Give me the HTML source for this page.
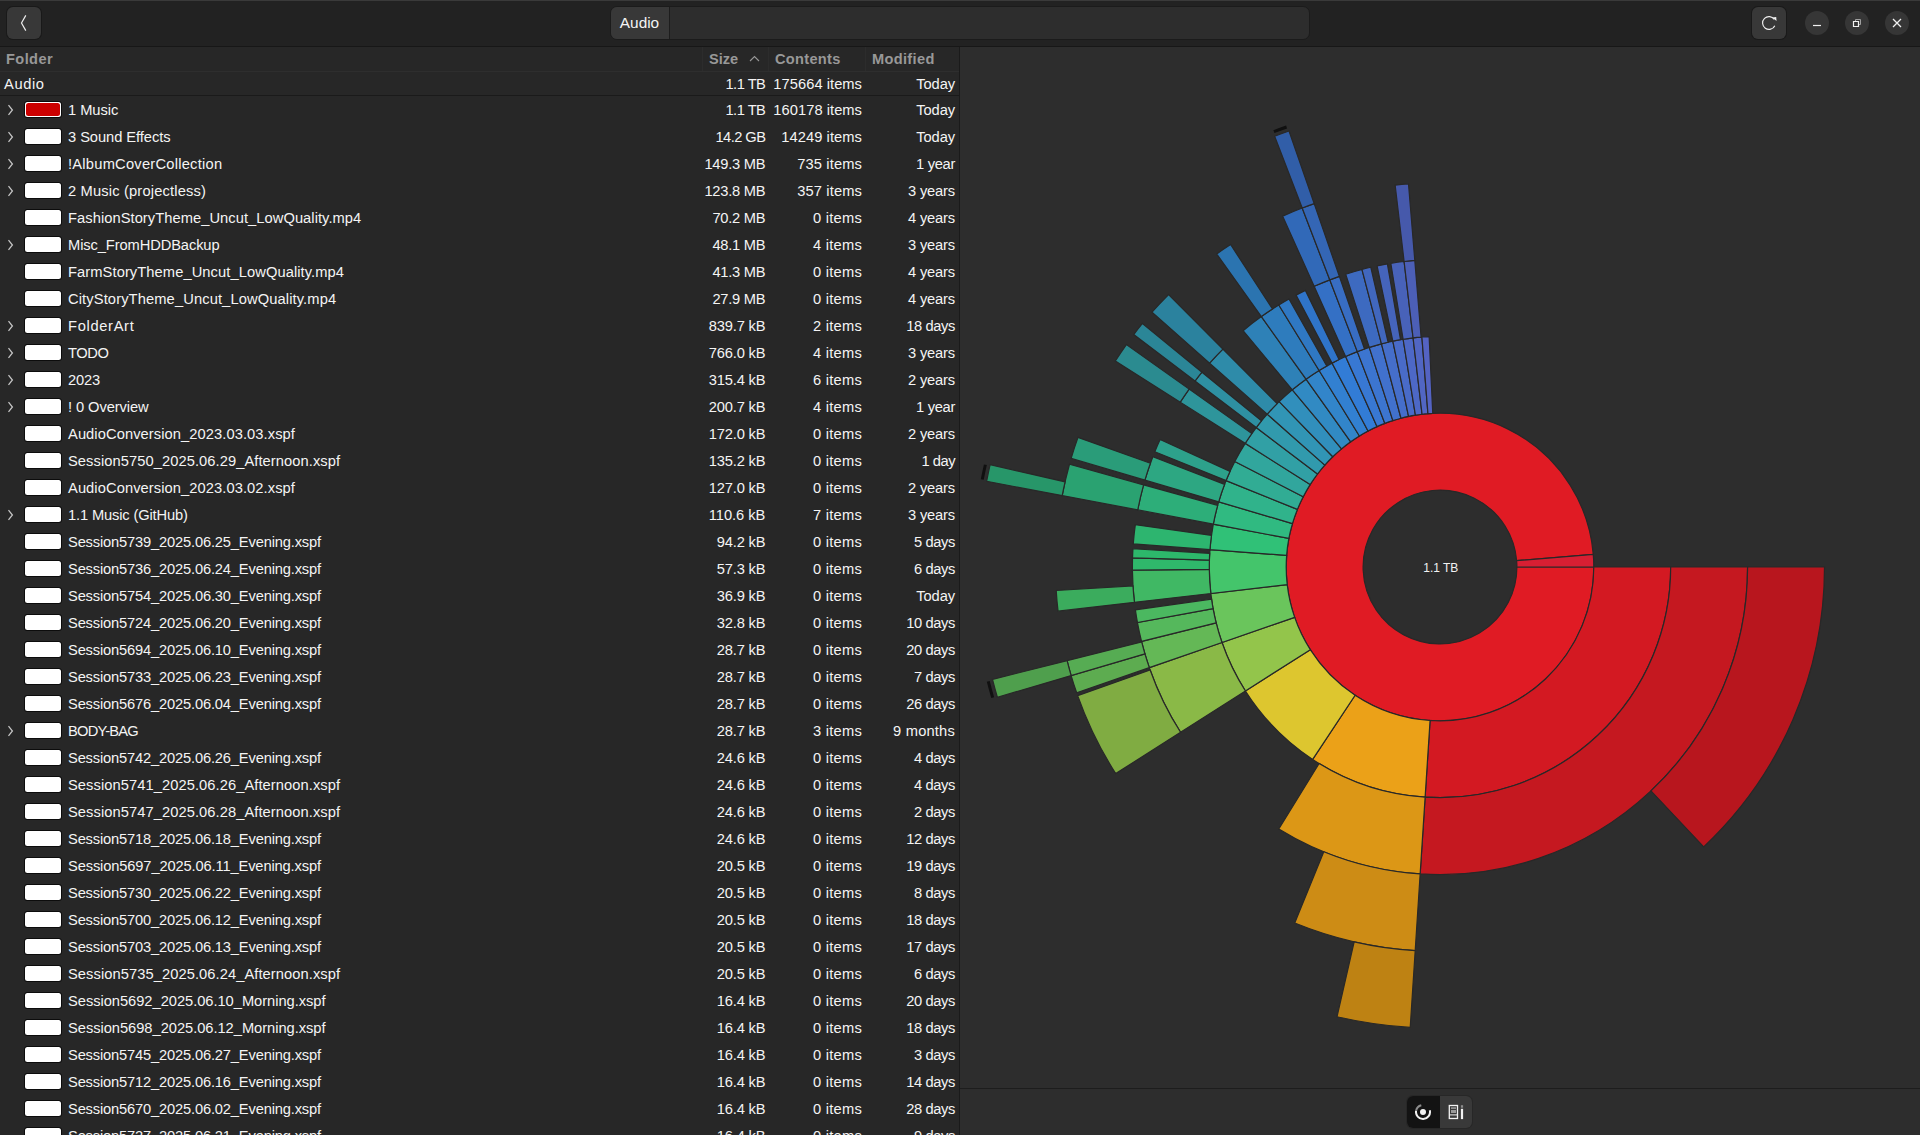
<!DOCTYPE html>
<html lang="en"><head><meta charset="utf-8"><title>Disk Usage Analyzer</title>
<style>
*{box-sizing:border-box;margin:0;padding:0}
html,body{width:1920px;height:1135px;overflow:hidden;background:#2d2d2d}
body{font-family:"Liberation Sans",sans-serif;font-size:14.7px;color:#f4f4f4;position:relative}
.hdr{position:absolute;left:0;top:0;width:1920px;height:47px;background:#222222;box-shadow:inset 0 1px 0 #3a3a3a,inset 0 -1px 0 #171717}
.btn{position:absolute;top:7px;width:34px;height:32px;border-radius:6px;background:#383838;box-shadow:0 0 0 1px #191919}
.btn svg{position:absolute;left:9px;top:8px;overflow:visible}
.path{position:absolute;left:610px;top:6px;width:700px;height:34px;border-radius:7px;background:#2d2d2d;border:1px solid #1b1b1b;overflow:hidden}
.path .crumb{position:absolute;left:0;top:0;width:59px;height:32px;background:#383838;border-right:1px solid #1d1d1d;line-height:32px;text-align:center;font-size:15.4px;text-indent:-1px;color:#f4f4f4}
.wb{position:absolute;top:11px;width:24px;height:24px;border-radius:12px;background:#363636}
.wb svg{position:absolute;left:4px;top:4px}
.list{position:absolute;left:0;top:47px;width:959px;height:1088px;background:#272727;overflow:hidden}
.vsep{position:absolute;left:959px;top:47px;width:1px;height:1088px;background:#1a1a1a}
.colh{position:absolute;left:0;top:0;width:959px;height:25px;border-bottom:1px solid #2e2e2e;font-weight:bold;color:#989898;font-size:14.6px;line-height:24px}
.colh span{position:absolute;top:0}
.colh i{position:absolute;top:0;width:1px;height:24px;background:#2c2c2c}
.root{position:absolute;left:0;top:25px;width:959px;height:24px;line-height:25px;border-bottom:1px solid #1a1a1a}
.rows{position:absolute;left:0;top:50px;width:959px}
.row{position:relative;height:27px;line-height:26px;white-space:nowrap}
.row .exp{position:absolute;left:2.7px;top:5px}
.sw{position:absolute;left:25px;top:5px;width:36px;height:15px;border-radius:2.5px;background:#fff;box-shadow:0 0 0 1px #0c0c0c}
.sw.r:after{content:'';position:absolute;left:1px;top:1px;right:1px;bottom:1px;border-radius:2.5px;background:#cc0000}
.nm{position:absolute;left:68px;top:0}
.c1,.c2,.c3{position:absolute;top:0;text-align:right}
.c1{right:193.6px}.c2{right:97px}.c3{right:4px}
.chart{position:absolute;left:960px;top:47px}
.bot{position:absolute;left:960px;top:1088px;width:960px;height:47px;background:#2d2d2d;border-top:1px solid #1d1d1d}
.tg{position:absolute;left:447px;top:7px;width:64.6px;height:32px;border-radius:6px;background:#393939;overflow:hidden;box-shadow:0 0 0 1px #272727}
.tg .a{position:absolute;left:0;top:0;width:32.8px;height:34px;background:#131313}
.tg svg{position:absolute}

</style></head>
<body>
<div class="hdr">
<div class="btn" style="left:7px"><svg width="16" height="16" viewBox="0 0 16 16"><path d="M9.8 0.4L5.5 8l4.3 7.6" fill="none" stroke="#ececec" stroke-width="1.2"/></svg></div>
<div class="path"><div class="crumb">Audio</div></div>
<div class="btn" style="left:1752px"><svg width="16" height="16" viewBox="0 0 16 16"><path d="M13.8 10.7A6.4 6.4 0 1 1 13.3 4.4" fill="none" stroke="#f0f0f0" stroke-width="1.15"/><path d="M11.3 2.5L15.2 1.9L15.5 5.9z" fill="#f0f0f0"/></svg></div>
<div class="wb" style="left:1805px"><svg width="16" height="16" viewBox="0 0 16 16"><path d="M4 10.5h8" stroke="#f0f0f0" stroke-width="1.2"/></svg></div>
<div class="wb" style="left:1845px"><svg width="16" height="16" viewBox="0 0 16 16"><path d="M4.5 6.5h5v5h-5z" fill="none" stroke="#f0f0f0" stroke-width="1.2"/><path d="M6.5 6V4.5h5v5H10" fill="none" stroke="#a0a0a0" stroke-width="1"/></svg></div>
<div class="wb" style="left:1885px"><svg width="16" height="16" viewBox="0 0 16 16"><path d="M4 4l8 8M12 4l-8 8" stroke="#f0f0f0" stroke-width="1.3"/></svg></div>
</div>
<div class="list">
<div class="colh"><span style="left:6px;letter-spacing:.4px">Folder</span><i style="left:702px"></i><span style="left:709px">Size</span><svg style="position:absolute;left:746.5px;top:4px" width="16" height="16" viewBox="0 0 16 16"><path d="M3 10l4.5-4.5L12 10" fill="none" stroke="#989898" stroke-width="1.1"/></svg><i style="left:768px"></i><span style="left:775px;letter-spacing:.3px">Contents</span><i style="left:865px"></i><span style="left:872px;letter-spacing:.33px">Modified</span></div>
<div class="root"><span class="nm" style="left:4px;letter-spacing:.6px">Audio</span><span class="c1" style="letter-spacing:-.503px">1.1 TB</span><span class="c2" style="letter-spacing:.039px">175664 items</span><span class="c3" style="letter-spacing:-.101px">Today</span></div>
<div class="rows">
<div class="row"><svg class="exp" width="16" height="16" viewBox="0 0 16 16"><path d="M5.5 3.2L9.4 8l-3.9 4.8" fill="none" stroke="#c6c6c6" stroke-width="1.25"/></svg><span class="sw r"></span><span class="nm" style="letter-spacing:-0.058px">1 Music</span><span class="c1" style="letter-spacing:-0.503px">1.1 TB</span><span class="c2" style="letter-spacing:0.039px">160178 items</span><span class="c3" style="letter-spacing:-0.101px">Today</span></div>
<div class="row"><svg class="exp" width="16" height="16" viewBox="0 0 16 16"><path d="M5.5 3.2L9.4 8l-3.9 4.8" fill="none" stroke="#c6c6c6" stroke-width="1.25"/></svg><span class="sw w"></span><span class="nm" style="letter-spacing:-0.062px">3 Sound Effects</span><span class="c1" style="letter-spacing:-0.556px">14.2 GB</span><span class="c2" style="letter-spacing:0.062px">14249 items</span><span class="c3" style="letter-spacing:-0.101px">Today</span></div>
<div class="row"><svg class="exp" width="16" height="16" viewBox="0 0 16 16"><path d="M5.5 3.2L9.4 8l-3.9 4.8" fill="none" stroke="#c6c6c6" stroke-width="1.25"/></svg><span class="sw w"></span><span class="nm" style="letter-spacing:0.234px">!AlbumCoverCollection</span><span class="c1" style="letter-spacing:-0.234px">149.3 MB</span><span class="c2" style="letter-spacing:0.124px">735 items</span><span class="c3" style="letter-spacing:-0.305px">1 year</span></div>
<div class="row"><svg class="exp" width="16" height="16" viewBox="0 0 16 16"><path d="M5.5 3.2L9.4 8l-3.9 4.8" fill="none" stroke="#c6c6c6" stroke-width="1.25"/></svg><span class="sw w"></span><span class="nm" style="letter-spacing:0.163px">2 Music (projectless)</span><span class="c1" style="letter-spacing:-0.234px">123.8 MB</span><span class="c2" style="letter-spacing:0.124px">357 items</span><span class="c3" style="letter-spacing:-0.167px">3 years</span></div>
<div class="row"><span class="sw w"></span><span class="nm" style="letter-spacing:0.056px">FashionStoryTheme_Uncut_LowQuality.mp4</span><span class="c1" style="letter-spacing:-0.243px">70.2 MB</span><span class="c2" style="letter-spacing:0.222px">0 items</span><span class="c3" style="letter-spacing:-0.167px">4 years</span></div>
<div class="row"><svg class="exp" width="16" height="16" viewBox="0 0 16 16"><path d="M5.5 3.2L9.4 8l-3.9 4.8" fill="none" stroke="#c6c6c6" stroke-width="1.25"/></svg><span class="sw w"></span><span class="nm" style="letter-spacing:-0.108px">Misc_FromHDDBackup</span><span class="c1" style="letter-spacing:-0.243px">48.1 MB</span><span class="c2" style="letter-spacing:0.222px">4 items</span><span class="c3" style="letter-spacing:-0.167px">3 years</span></div>
<div class="row"><span class="sw w"></span><span class="nm" style="letter-spacing:0.083px">FarmStoryTheme_Uncut_LowQuality.mp4</span><span class="c1" style="letter-spacing:-0.243px">41.3 MB</span><span class="c2" style="letter-spacing:0.222px">0 items</span><span class="c3" style="letter-spacing:-0.167px">4 years</span></div>
<div class="row"><span class="sw w"></span><span class="nm" style="letter-spacing:0.114px">CityStoryTheme_Uncut_LowQuality.mp4</span><span class="c1" style="letter-spacing:-0.243px">27.9 MB</span><span class="c2" style="letter-spacing:0.222px">0 items</span><span class="c3" style="letter-spacing:-0.167px">4 years</span></div>
<div class="row"><svg class="exp" width="16" height="16" viewBox="0 0 16 16"><path d="M5.5 3.2L9.4 8l-3.9 4.8" fill="none" stroke="#c6c6c6" stroke-width="1.25"/></svg><span class="sw w"></span><span class="nm" style="letter-spacing:0.666px">FolderArt</span><span class="c1" style="letter-spacing:-0.161px">839.7 kB</span><span class="c2" style="letter-spacing:0.222px">2 items</span><span class="c3" style="letter-spacing:-0.379px">18 days</span></div>
<div class="row"><svg class="exp" width="16" height="16" viewBox="0 0 16 16"><path d="M5.5 3.2L9.4 8l-3.9 4.8" fill="none" stroke="#c6c6c6" stroke-width="1.25"/></svg><span class="sw w"></span><span class="nm" style="letter-spacing:-0.418px">TODO</span><span class="c1" style="letter-spacing:-0.161px">766.0 kB</span><span class="c2" style="letter-spacing:0.222px">4 items</span><span class="c3" style="letter-spacing:-0.167px">3 years</span></div>
<div class="row"><svg class="exp" width="16" height="16" viewBox="0 0 16 16"><path d="M5.5 3.2L9.4 8l-3.9 4.8" fill="none" stroke="#c6c6c6" stroke-width="1.25"/></svg><span class="sw w"></span><span class="nm" style="letter-spacing:-0.147px">2023</span><span class="c1" style="letter-spacing:-0.161px">315.4 kB</span><span class="c2" style="letter-spacing:0.222px">6 items</span><span class="c3" style="letter-spacing:-0.167px">2 years</span></div>
<div class="row"><svg class="exp" width="16" height="16" viewBox="0 0 16 16"><path d="M5.5 3.2L9.4 8l-3.9 4.8" fill="none" stroke="#c6c6c6" stroke-width="1.25"/></svg><span class="sw w"></span><span class="nm" style="letter-spacing:-0.085px">! 0 Overview</span><span class="c1" style="letter-spacing:-0.161px">200.7 kB</span><span class="c2" style="letter-spacing:0.222px">4 items</span><span class="c3" style="letter-spacing:-0.305px">1 year</span></div>
<div class="row"><span class="sw w"></span><span class="nm" style="letter-spacing:0.079px">AudioConversion_2023.03.03.xspf</span><span class="c1" style="letter-spacing:-0.161px">172.0 kB</span><span class="c2" style="letter-spacing:0.222px">0 items</span><span class="c3" style="letter-spacing:-0.167px">2 years</span></div>
<div class="row"><span class="sw w"></span><span class="nm" style="letter-spacing:0.071px">Session5750_2025.06.29_Afternoon.xspf</span><span class="c1" style="letter-spacing:-0.161px">135.2 kB</span><span class="c2" style="letter-spacing:0.222px">0 items</span><span class="c3" style="letter-spacing:-0.508px">1 day</span></div>
<div class="row"><span class="sw w"></span><span class="nm" style="letter-spacing:0.079px">AudioConversion_2023.03.02.xspf</span><span class="c1" style="letter-spacing:-0.161px">127.0 kB</span><span class="c2" style="letter-spacing:0.222px">0 items</span><span class="c3" style="letter-spacing:-0.167px">2 years</span></div>
<div class="row"><svg class="exp" width="16" height="16" viewBox="0 0 16 16"><path d="M5.5 3.2L9.4 8l-3.9 4.8" fill="none" stroke="#c6c6c6" stroke-width="1.25"/></svg><span class="sw w"></span><span class="nm" style="letter-spacing:-0.152px">1.1 Music (GitHub)</span><span class="c1" style="letter-spacing:-0.024px">110.6 kB</span><span class="c2" style="letter-spacing:0.222px">7 items</span><span class="c3" style="letter-spacing:-0.167px">3 years</span></div>
<div class="row"><span class="sw w"></span><span class="nm" style="letter-spacing:-0.171px">Session5739_2025.06.25_Evening.xspf</span><span class="c1" style="letter-spacing:-0.173px">94.2 kB</span><span class="c2" style="letter-spacing:0.222px">0 items</span><span class="c3" style="letter-spacing:-0.380px">5 days</span></div>
<div class="row"><span class="sw w"></span><span class="nm" style="letter-spacing:-0.171px">Session5736_2025.06.24_Evening.xspf</span><span class="c1" style="letter-spacing:-0.173px">57.3 kB</span><span class="c2" style="letter-spacing:0.222px">0 items</span><span class="c3" style="letter-spacing:-0.380px">6 days</span></div>
<div class="row"><span class="sw w"></span><span class="nm" style="letter-spacing:-0.171px">Session5754_2025.06.30_Evening.xspf</span><span class="c1" style="letter-spacing:-0.173px">36.9 kB</span><span class="c2" style="letter-spacing:0.222px">0 items</span><span class="c3" style="letter-spacing:-0.101px">Today</span></div>
<div class="row"><span class="sw w"></span><span class="nm" style="letter-spacing:-0.171px">Session5724_2025.06.20_Evening.xspf</span><span class="c1" style="letter-spacing:-0.173px">32.8 kB</span><span class="c2" style="letter-spacing:0.222px">0 items</span><span class="c3" style="letter-spacing:-0.379px">10 days</span></div>
<div class="row"><span class="sw w"></span><span class="nm" style="letter-spacing:-0.171px">Session5694_2025.06.10_Evening.xspf</span><span class="c1" style="letter-spacing:-0.173px">28.7 kB</span><span class="c2" style="letter-spacing:0.222px">0 items</span><span class="c3" style="letter-spacing:-0.379px">20 days</span></div>
<div class="row"><span class="sw w"></span><span class="nm" style="letter-spacing:-0.171px">Session5733_2025.06.23_Evening.xspf</span><span class="c1" style="letter-spacing:-0.173px">28.7 kB</span><span class="c2" style="letter-spacing:0.222px">0 items</span><span class="c3" style="letter-spacing:-0.380px">7 days</span></div>
<div class="row"><span class="sw w"></span><span class="nm" style="letter-spacing:-0.171px">Session5676_2025.06.04_Evening.xspf</span><span class="c1" style="letter-spacing:-0.173px">28.7 kB</span><span class="c2" style="letter-spacing:0.222px">0 items</span><span class="c3" style="letter-spacing:-0.379px">26 days</span></div>
<div class="row"><svg class="exp" width="16" height="16" viewBox="0 0 16 16"><path d="M5.5 3.2L9.4 8l-3.9 4.8" fill="none" stroke="#c6c6c6" stroke-width="1.25"/></svg><span class="sw w"></span><span class="nm" style="letter-spacing:-0.773px">BODY-BAG</span><span class="c1" style="letter-spacing:-0.173px">28.7 kB</span><span class="c2" style="letter-spacing:0.222px">3 items</span><span class="c3" style="letter-spacing:0.185px">9 months</span></div>
<div class="row"><span class="sw w"></span><span class="nm" style="letter-spacing:-0.171px">Session5742_2025.06.26_Evening.xspf</span><span class="c1" style="letter-spacing:-0.173px">24.6 kB</span><span class="c2" style="letter-spacing:0.222px">0 items</span><span class="c3" style="letter-spacing:-0.380px">4 days</span></div>
<div class="row"><span class="sw w"></span><span class="nm" style="letter-spacing:0.071px">Session5741_2025.06.26_Afternoon.xspf</span><span class="c1" style="letter-spacing:-0.173px">24.6 kB</span><span class="c2" style="letter-spacing:0.222px">0 items</span><span class="c3" style="letter-spacing:-0.380px">4 days</span></div>
<div class="row"><span class="sw w"></span><span class="nm" style="letter-spacing:0.071px">Session5747_2025.06.28_Afternoon.xspf</span><span class="c1" style="letter-spacing:-0.173px">24.6 kB</span><span class="c2" style="letter-spacing:0.222px">0 items</span><span class="c3" style="letter-spacing:-0.380px">2 days</span></div>
<div class="row"><span class="sw w"></span><span class="nm" style="letter-spacing:-0.171px">Session5718_2025.06.18_Evening.xspf</span><span class="c1" style="letter-spacing:-0.173px">24.6 kB</span><span class="c2" style="letter-spacing:0.222px">0 items</span><span class="c3" style="letter-spacing:-0.379px">12 days</span></div>
<div class="row"><span class="sw w"></span><span class="nm" style="letter-spacing:-0.139px">Session5697_2025.06.11_Evening.xspf</span><span class="c1" style="letter-spacing:-0.173px">20.5 kB</span><span class="c2" style="letter-spacing:0.222px">0 items</span><span class="c3" style="letter-spacing:-0.379px">19 days</span></div>
<div class="row"><span class="sw w"></span><span class="nm" style="letter-spacing:-0.171px">Session5730_2025.06.22_Evening.xspf</span><span class="c1" style="letter-spacing:-0.173px">20.5 kB</span><span class="c2" style="letter-spacing:0.222px">0 items</span><span class="c3" style="letter-spacing:-0.380px">8 days</span></div>
<div class="row"><span class="sw w"></span><span class="nm" style="letter-spacing:-0.171px">Session5700_2025.06.12_Evening.xspf</span><span class="c1" style="letter-spacing:-0.173px">20.5 kB</span><span class="c2" style="letter-spacing:0.222px">0 items</span><span class="c3" style="letter-spacing:-0.379px">18 days</span></div>
<div class="row"><span class="sw w"></span><span class="nm" style="letter-spacing:-0.171px">Session5703_2025.06.13_Evening.xspf</span><span class="c1" style="letter-spacing:-0.173px">20.5 kB</span><span class="c2" style="letter-spacing:0.222px">0 items</span><span class="c3" style="letter-spacing:-0.379px">17 days</span></div>
<div class="row"><span class="sw w"></span><span class="nm" style="letter-spacing:0.071px">Session5735_2025.06.24_Afternoon.xspf</span><span class="c1" style="letter-spacing:-0.173px">20.5 kB</span><span class="c2" style="letter-spacing:0.222px">0 items</span><span class="c3" style="letter-spacing:-0.380px">6 days</span></div>
<div class="row"><span class="sw w"></span><span class="nm" style="letter-spacing:-0.039px">Session5692_2025.06.10_Morning.xspf</span><span class="c1" style="letter-spacing:-0.173px">16.4 kB</span><span class="c2" style="letter-spacing:0.222px">0 items</span><span class="c3" style="letter-spacing:-0.379px">20 days</span></div>
<div class="row"><span class="sw w"></span><span class="nm" style="letter-spacing:-0.039px">Session5698_2025.06.12_Morning.xspf</span><span class="c1" style="letter-spacing:-0.173px">16.4 kB</span><span class="c2" style="letter-spacing:0.222px">0 items</span><span class="c3" style="letter-spacing:-0.379px">18 days</span></div>
<div class="row"><span class="sw w"></span><span class="nm" style="letter-spacing:-0.171px">Session5745_2025.06.27_Evening.xspf</span><span class="c1" style="letter-spacing:-0.173px">16.4 kB</span><span class="c2" style="letter-spacing:0.222px">0 items</span><span class="c3" style="letter-spacing:-0.380px">3 days</span></div>
<div class="row"><span class="sw w"></span><span class="nm" style="letter-spacing:-0.171px">Session5712_2025.06.16_Evening.xspf</span><span class="c1" style="letter-spacing:-0.173px">16.4 kB</span><span class="c2" style="letter-spacing:0.222px">0 items</span><span class="c3" style="letter-spacing:-0.379px">14 days</span></div>
<div class="row"><span class="sw w"></span><span class="nm" style="letter-spacing:-0.171px">Session5670_2025.06.02_Evening.xspf</span><span class="c1" style="letter-spacing:-0.173px">16.4 kB</span><span class="c2" style="letter-spacing:0.222px">0 items</span><span class="c3" style="letter-spacing:-0.379px">28 days</span></div>
<div class="row"><span class="sw w"></span><span class="nm" style="letter-spacing:-0.171px">Session5727_2025.06.21_Evening.xspf</span><span class="c1" style="letter-spacing:-0.173px">16.4 kB</span><span class="c2" style="letter-spacing:0.222px">0 items</span><span class="c3" style="letter-spacing:-0.380px">9 days</span></div>
</div>
</div>
<div class="vsep"></div>
<svg class="chart" width="960" height="1040" viewBox="960 47 960 1040">
<g stroke="#282828" stroke-width="1.2" stroke-linejoin="miter">
<path d="M1516.90 567.00L1593.80 567.00A153.80 153.80 0 1 1 1593.28 554.40L1516.64 560.70A76.90 76.90 0 1 0 1516.90 567.00Z" fill="#e01b24"/>
<path d="M1516.64 560.70L1593.28 554.40A153.80 153.80 0 0 1 1593.80 567.00L1516.90 567.00A76.90 76.90 0 0 0 1516.64 560.70Z" fill="#d71f33"/>
<path d="M1593.80 567.00L1670.70 567.00A230.70 230.70 0 0 1 1425.11 797.22L1430.07 720.48A153.80 153.80 0 0 0 1593.80 567.00Z" fill="#d31922"/>
<path d="M1430.07 720.48L1425.11 797.22A230.70 230.70 0 0 1 1312.67 759.38L1355.11 695.25A153.80 153.80 0 0 0 1430.07 720.48Z" fill="#eba118"/>
<path d="M1355.11 695.25L1312.67 759.38A230.70 230.70 0 0 1 1245.43 690.96L1310.29 649.64A153.80 153.80 0 0 0 1355.11 695.25Z" fill="#ddc62f"/>
<path d="M1310.29 649.64L1245.43 690.96A230.70 230.70 0 0 1 1222.00 642.49L1294.67 617.33A153.80 153.80 0 0 0 1310.29 649.64Z" fill="#93c54b"/>
<path d="M1294.67 617.33L1222.00 642.49A230.70 230.70 0 0 1 1210.83 593.52L1287.22 584.68A153.80 153.80 0 0 0 1294.67 617.33Z" fill="#6ac55c"/>
<path d="M1287.22 584.68L1210.83 593.52A230.70 230.70 0 0 1 1209.95 549.70L1286.63 555.47A153.80 153.80 0 0 0 1287.22 584.68Z" fill="#44c56b"/>
<path d="M1286.63 555.47L1209.95 549.70A230.70 230.70 0 0 1 1213.31 524.17L1288.87 538.44A153.80 153.80 0 0 0 1286.63 555.47Z" fill="#30c177"/>
<path d="M1288.87 538.44L1213.31 524.17A230.70 230.70 0 0 1 1218.69 501.86L1292.46 523.58A153.80 153.80 0 0 0 1288.87 538.44Z" fill="#30ba81"/>
<path d="M1292.46 523.58L1218.69 501.86A230.70 230.70 0 0 1 1226.10 480.58L1297.40 509.39A153.80 153.80 0 0 0 1292.46 523.58Z" fill="#30b38b"/>
<path d="M1297.40 509.39L1226.10 480.58A230.70 230.70 0 0 1 1234.81 461.55L1303.21 496.70A153.80 153.80 0 0 0 1297.40 509.39Z" fill="#31ac94"/>
<path d="M1303.21 496.70L1234.81 461.55A230.70 230.70 0 0 1 1245.21 443.38L1310.14 484.59A153.80 153.80 0 0 0 1303.21 496.70Z" fill="#31a69d"/>
<path d="M1310.14 484.59L1245.21 443.38A230.70 230.70 0 0 1 1256.24 427.52L1317.49 474.01A153.80 153.80 0 0 0 1310.14 484.59Z" fill="#31a0a5"/>
<path d="M1317.49 474.01L1256.24 427.52A230.70 230.70 0 0 1 1267.22 414.13L1324.81 465.09A153.80 153.80 0 0 0 1317.49 474.01Z" fill="#319aad"/>
<path d="M1324.81 465.09L1267.22 414.13A230.70 230.70 0 0 1 1279.16 401.61L1332.78 456.74A153.80 153.80 0 0 0 1324.81 465.09Z" fill="#3195b5"/>
<path d="M1332.78 456.74L1279.16 401.61A230.70 230.70 0 0 1 1292.33 389.76L1341.55 448.84A153.80 153.80 0 0 0 1332.78 456.74Z" fill="#318fbc"/>
<path d="M1341.55 448.84L1292.33 389.76A230.70 230.70 0 0 1 1306.03 379.18L1350.69 441.79A153.80 153.80 0 0 0 1341.55 448.84Z" fill="#318ac3"/>
<path d="M1350.69 441.79L1306.03 379.18A230.70 230.70 0 0 1 1319.12 370.51L1359.41 436.00A153.80 153.80 0 0 0 1350.69 441.79Z" fill="#3285ca"/>
<path d="M1359.41 436.00L1319.12 370.51A230.70 230.70 0 0 1 1332.05 363.12L1368.03 431.08A153.80 153.80 0 0 0 1359.41 436.00Z" fill="#3280d1"/>
<path d="M1368.03 431.08L1332.05 363.12A230.70 230.70 0 0 1 1345.61 356.49L1377.08 426.66A153.80 153.80 0 0 0 1368.03 431.08Z" fill="#327cd6"/>
<path d="M1377.08 426.66L1345.61 356.49A230.70 230.70 0 0 1 1357.32 351.62L1384.88 423.42A153.80 153.80 0 0 0 1377.08 426.66Z" fill="#3878d3"/>
<path d="M1384.88 423.42L1357.32 351.62A230.70 230.70 0 0 1 1369.28 347.41L1392.86 420.60A153.80 153.80 0 0 0 1384.88 423.42Z" fill="#3c75d0"/>
<path d="M1392.86 420.60L1369.28 347.41A230.70 230.70 0 0 1 1381.46 343.85L1400.97 418.23A153.80 153.80 0 0 0 1392.86 420.60Z" fill="#4171cd"/>
<path d="M1400.97 418.23L1381.46 343.85A230.70 230.70 0 0 1 1392.82 341.18L1408.55 416.45A153.80 153.80 0 0 0 1400.97 418.23Z" fill="#456eca"/>
<path d="M1408.55 416.45L1392.82 341.18A230.70 230.70 0 0 1 1403.12 339.27L1415.41 415.18A153.80 153.80 0 0 0 1408.55 416.45Z" fill="#496bc8"/>
<path d="M1415.41 415.18L1403.12 339.27A230.70 230.70 0 0 1 1413.08 337.88L1422.06 414.25A153.80 153.80 0 0 0 1415.41 415.18Z" fill="#4d68c6"/>
<path d="M1422.06 414.25L1413.08 337.88A230.70 230.70 0 0 1 1421.90 337.01L1427.93 413.67A153.80 153.80 0 0 0 1422.06 414.25Z" fill="#5166c3"/>
<path d="M1427.93 413.67L1421.90 337.01A230.70 230.70 0 0 1 1429.13 336.56L1432.76 413.37A153.80 153.80 0 0 0 1427.93 413.67Z" fill="#5463c2"/>
<path d="M1670.70 567.00L1747.60 567.00A307.60 307.60 0 0 1 1420.15 873.96L1425.11 797.22A230.70 230.70 0 0 0 1670.70 567.00Z" fill="#c51820"/>
<path d="M1425.11 797.22L1420.15 873.96A307.60 307.60 0 0 1 1278.82 828.99L1319.12 763.49A230.70 230.70 0 0 0 1425.11 797.22Z" fill="#dc9716"/>
<path d="M1245.43 690.96L1180.57 732.27A307.60 307.60 0 0 1 1149.33 667.65L1222.00 642.49A230.70 230.70 0 0 0 1245.43 690.96Z" fill="#8ab947"/>
<path d="M1222.00 642.49L1149.33 667.65A307.60 307.60 0 0 1 1141.54 641.42L1216.15 622.81A230.70 230.70 0 0 0 1222.00 642.49Z" fill="#64b856"/>
<path d="M1216.15 622.81L1141.54 641.42A307.60 307.60 0 0 1 1137.45 622.53L1213.09 608.65A230.70 230.70 0 0 0 1216.15 622.81Z" fill="#55b85c"/>
<path d="M1213.09 608.65L1137.45 622.53A307.60 307.60 0 0 1 1135.39 609.81L1211.55 599.11A230.70 230.70 0 0 0 1213.09 608.65Z" fill="#4bb860"/>
<path d="M1210.83 593.52L1134.44 602.35A307.60 307.60 0 0 1 1132.42 570.22L1209.31 569.42A230.70 230.70 0 0 0 1210.83 593.52Z" fill="#40b864"/>
<path d="M1209.31 569.42L1132.42 570.22A307.60 307.60 0 0 1 1132.54 557.87L1209.40 560.16A230.70 230.70 0 0 0 1209.31 569.42Z" fill="#2fb86b"/>
<path d="M1209.40 560.16L1132.54 557.87A307.60 307.60 0 0 1 1132.94 548.76L1209.71 553.32A230.70 230.70 0 0 0 1209.40 560.16Z" fill="#2db86b"/>
<path d="M1209.95 549.70L1133.27 543.94A307.60 307.60 0 0 1 1135.32 524.72L1211.49 535.29A230.70 230.70 0 0 0 1209.95 549.70Z" fill="#2db56f"/>
<path d="M1213.31 524.17L1137.75 509.89A307.60 307.60 0 0 1 1143.59 484.80L1217.69 505.35A230.70 230.70 0 0 0 1213.31 524.17Z" fill="#2dae79"/>
<path d="M1218.69 501.86L1144.92 480.15A307.60 307.60 0 0 1 1152.83 456.77L1224.62 484.32A230.70 230.70 0 0 0 1218.69 501.86Z" fill="#2da782"/>
<path d="M1226.10 480.58L1154.80 451.77A307.60 307.60 0 0 1 1160.10 439.44L1230.07 471.33A230.70 230.70 0 0 0 1226.10 480.58Z" fill="#2da18b"/>
<path d="M1245.21 443.38L1180.28 402.18A307.60 307.60 0 0 1 1189.11 389.03L1251.83 433.52A230.70 230.70 0 0 0 1245.21 443.38Z" fill="#2e959b"/>
<path d="M1256.24 427.52L1194.99 381.03A307.60 307.60 0 0 1 1201.97 372.17L1261.48 420.88A230.70 230.70 0 0 0 1256.24 427.52Z" fill="#2e90a2"/>
<path d="M1267.22 414.13L1209.62 363.18A307.60 307.60 0 0 1 1222.87 349.11L1277.16 403.59A230.70 230.70 0 0 0 1267.22 414.13Z" fill="#2e8ba9"/>
<path d="M1292.33 389.76L1243.10 330.68A307.60 307.60 0 0 1 1261.38 316.58L1306.03 379.18A230.70 230.70 0 0 0 1292.33 389.76Z" fill="#2e81b7"/>
<path d="M1306.03 379.18L1261.38 316.58A307.60 307.60 0 0 1 1278.82 305.01L1319.12 370.51A230.70 230.70 0 0 0 1306.03 379.18Z" fill="#2e7cbd"/>
<path d="M1319.12 370.51L1278.82 305.01A307.60 307.60 0 0 1 1289.00 299.01L1326.75 366.01A230.70 230.70 0 0 0 1319.12 370.51Z" fill="#2f78c3"/>
<path d="M1332.05 363.12L1296.06 295.15A307.60 307.60 0 0 1 1305.40 290.41L1339.05 359.56A230.70 230.70 0 0 0 1332.05 363.12Z" fill="#2f74c9"/>
<path d="M1345.61 356.49L1314.15 286.32A307.60 307.60 0 0 1 1329.77 279.83L1357.32 351.62A230.70 230.70 0 0 0 1345.61 356.49Z" fill="#3470c5"/>
<path d="M1357.32 351.62L1329.77 279.83A307.60 307.60 0 0 1 1339.35 276.33L1364.51 349.00A230.70 230.70 0 0 0 1357.32 351.62Z" fill="#386dc3"/>
<path d="M1369.28 347.41L1345.71 274.21A307.60 307.60 0 0 1 1361.94 269.47L1381.46 343.85A230.70 230.70 0 0 0 1369.28 347.41Z" fill="#3d6ac0"/>
<path d="M1381.46 343.85L1361.94 269.47A307.60 307.60 0 0 1 1370.81 267.28L1388.10 342.21A230.70 230.70 0 0 0 1381.46 343.85Z" fill="#4167be"/>
<path d="M1392.82 341.18L1377.10 265.90A307.60 307.60 0 0 1 1387.38 263.93L1400.53 339.70A230.70 230.70 0 0 0 1392.82 341.18Z" fill="#4564bb"/>
<path d="M1403.12 339.27L1390.82 263.36A307.60 307.60 0 0 1 1404.11 261.50L1413.08 337.88A230.70 230.70 0 0 0 1403.12 339.27Z" fill="#4862b9"/>
<path d="M1413.08 337.88L1404.11 261.50A307.60 307.60 0 0 1 1414.80 260.43L1421.10 337.08A230.70 230.70 0 0 0 1413.08 337.88Z" fill="#4c5fb7"/>
<path d="M1747.60 567.00L1824.50 567.00A384.50 384.50 0 0 1 1703.70 846.83L1650.96 790.86A307.60 307.60 0 0 0 1747.60 567.00Z" fill="#b8161e"/>
<path d="M1420.15 873.96L1415.19 950.70A384.50 384.50 0 0 1 1294.72 923.00L1323.78 851.80A307.60 307.60 0 0 0 1420.15 873.96Z" fill="#cd8c15"/>
<path d="M1180.57 732.27L1115.72 773.59A384.50 384.50 0 0 1 1077.67 695.66L1150.13 669.93A307.60 307.60 0 0 0 1180.57 732.27Z" fill="#80ac42"/>
<path d="M1149.33 667.65L1076.67 692.82A384.50 384.50 0 0 1 1071.14 675.56L1144.92 653.85A307.60 307.60 0 0 0 1149.33 667.65Z" fill="#5dac50"/>
<path d="M1144.92 653.85L1071.14 675.56A384.50 384.50 0 0 1 1067.08 660.67L1141.67 641.94A307.60 307.60 0 0 0 1144.92 653.85Z" fill="#56ac53"/>
<path d="M1134.44 602.35L1058.05 611.19A384.50 384.50 0 0 1 1056.22 590.47L1132.97 585.78A307.60 307.60 0 0 0 1134.44 602.35Z" fill="#3bac5d"/>
<path d="M1137.75 509.89L1062.19 495.61A384.50 384.50 0 0 1 1069.48 464.25L1143.59 484.80A307.60 307.60 0 0 0 1137.75 509.89Z" fill="#2aa271"/>
<path d="M1144.92 480.15L1071.14 458.44A384.50 384.50 0 0 1 1078.00 437.39L1150.40 463.31A307.60 307.60 0 0 0 1144.92 480.15Z" fill="#2a9c79"/>
<path d="M1180.28 402.18L1115.36 360.97A384.50 384.50 0 0 1 1126.39 344.54L1189.11 389.03A307.60 307.60 0 0 0 1180.28 402.18Z" fill="#2b8b90"/>
<path d="M1194.99 381.03L1133.73 334.53A384.50 384.50 0 0 1 1142.46 323.47L1201.97 372.17A307.60 307.60 0 0 0 1194.99 381.03Z" fill="#2b8697"/>
<path d="M1209.62 363.18L1152.03 312.22A384.50 384.50 0 0 1 1168.59 294.64L1222.87 349.11A307.60 307.60 0 0 0 1209.62 363.18Z" fill="#2b829e"/>
<path d="M1261.38 316.58L1216.72 253.97A384.50 384.50 0 0 1 1230.59 244.53L1272.47 309.02A307.60 307.60 0 0 0 1261.38 316.58Z" fill="#2b74b0"/>
<path d="M1314.15 286.32L1282.69 216.15A384.50 384.50 0 0 1 1302.21 208.04L1329.77 279.83A307.60 307.60 0 0 0 1314.15 286.32Z" fill="#3169b8"/>
<path d="M1329.77 279.83L1302.21 208.04A384.50 384.50 0 0 1 1314.18 203.67L1339.35 276.33A307.60 307.60 0 0 0 1329.77 279.83Z" fill="#3466b5"/>
<path d="M1404.11 261.50L1395.14 185.13A384.50 384.50 0 0 1 1408.49 183.79L1414.80 260.43A307.60 307.60 0 0 0 1404.11 261.50Z" fill="#4659ab"/>
<path d="M1415.19 950.70L1410.22 1027.44A461.40 461.40 0 0 1 1336.99 1016.75L1354.16 941.80A384.50 384.50 0 0 0 1415.19 950.70Z" fill="#be8213"/>
<path d="M1071.14 675.56L997.37 697.27A461.40 461.40 0 0 1 992.50 679.40L1067.08 660.67A384.50 384.50 0 0 0 1071.14 675.56Z" fill="#4f9f4d"/>
<path d="M1062.19 495.61L986.62 481.33A461.40 461.40 0 0 1 990.07 464.78L1065.06 481.81A384.50 384.50 0 0 0 1062.19 495.61Z" fill="#279669"/>
<path d="M1302.21 208.04L1274.65 136.25A461.40 461.40 0 0 1 1289.02 131.00L1314.18 203.67A384.50 384.50 0 0 0 1302.21 208.04Z" fill="#315ea8"/>
</g>
<path d="M992.69 697.63A466.00 466.00 0 0 1 988.28 681.47" fill="none" stroke="#101010" stroke-width="3"/>
<path d="M982.28 479.52A466.00 466.00 0 0 1 985.37 464.71" fill="none" stroke="#101010" stroke-width="3"/>
<path d="M1273.91 131.60A466.00 466.00 0 0 1 1286.59 126.97" fill="none" stroke="#101010" stroke-width="3"/>
<text x="1440.8" y="571.6" text-anchor="middle" font-family="Liberation Sans, sans-serif" font-size="12" fill="#f2f2f2">1.1 TB</text>
</svg>
<div class="bot"><div class="tg"><div class="a"></div>
<svg style="left:8px;top:7px" width="18" height="18" viewBox="0 0 18 18"><circle cx="8" cy="9" r="3" fill="#f2f2f2"/><path d="M14.76 7.19A7 7 0 1 1 1.11 7.78" fill="none" stroke="#f2f2f2" stroke-width="2"/><path d="M1.11 7.78A7 7 0 0 1 6.3 2.2" fill="none" stroke="#8c8c8c" stroke-width="2"/></svg>
<svg style="left:41px;top:7px" width="18" height="18" viewBox="0 0 18 18"><rect x="1.3" y="2.5" width="8.2" height="13" fill="none" stroke="#f2f2f2" stroke-width="1.3"/><rect x="3" y="4.3" width="5" height="1.6" fill="#9a9a9a"/><rect x="3" y="7" width="5" height="3" fill="#9a9a9a"/><rect x="1.3" y="11.4" width="8.2" height="1" fill="#f2f2f2"/><rect x="12.9" y="5.8" width="2.2" height="10.3" fill="#f2f2f2"/><rect x="12.9" y="2.2" width="2.2" height="2.5" fill="#8c8c8c"/></svg>
</div></div>

</body></html>
